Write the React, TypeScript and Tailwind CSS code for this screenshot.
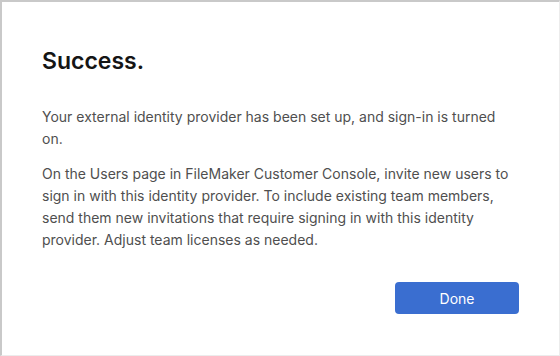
import React from "react";

const SuccessDialog: React.FC = () => {
  return (
    <div className="w-[560px] h-[356px] bg-white border-t-2 border-l-2 border-r border-b border-t-[#c9c9c9] border-l-[#c9c9c9] border-r-[#ececec] border-b-[#ececec] flex flex-col font-['Inter',sans-serif]">
      <div className="pl-[40px] pr-[40px] pt-[44px] flex flex-col flex-grow">
        {/* Title */}
        <h1 className="text-[23px] leading-[30px] font-semibold text-[#151515]">Success.</h1>

        {/* Body */}
        <p className="mt-[30px] text-[14px] leading-[22px] text-[#4f4f4f]">
          Your external identity provider has been set up, and sign-in is turned on.
        </p>
        <p className="mt-[13px] text-[14px] leading-[22px] text-[#4f4f4f]">
          On the Users page in FileMaker Customer Console, invite new users to sign in with this
          identity provider. To include existing team members, send them new invitations that
          require signing in with this identity provider. Adjust team licenses as needed.
        </p>

        {/* Actions */}
        <div className="flex justify-end mt-[31px]">
          <button className="w-[124px] h-[32px] rounded-[4px] bg-[#3a6ed0] text-white text-[14px]">
            Done
          </button>
        </div>
      </div>
    </div>
  );
};

export default function App() {
  return <SuccessDialog />;
}
